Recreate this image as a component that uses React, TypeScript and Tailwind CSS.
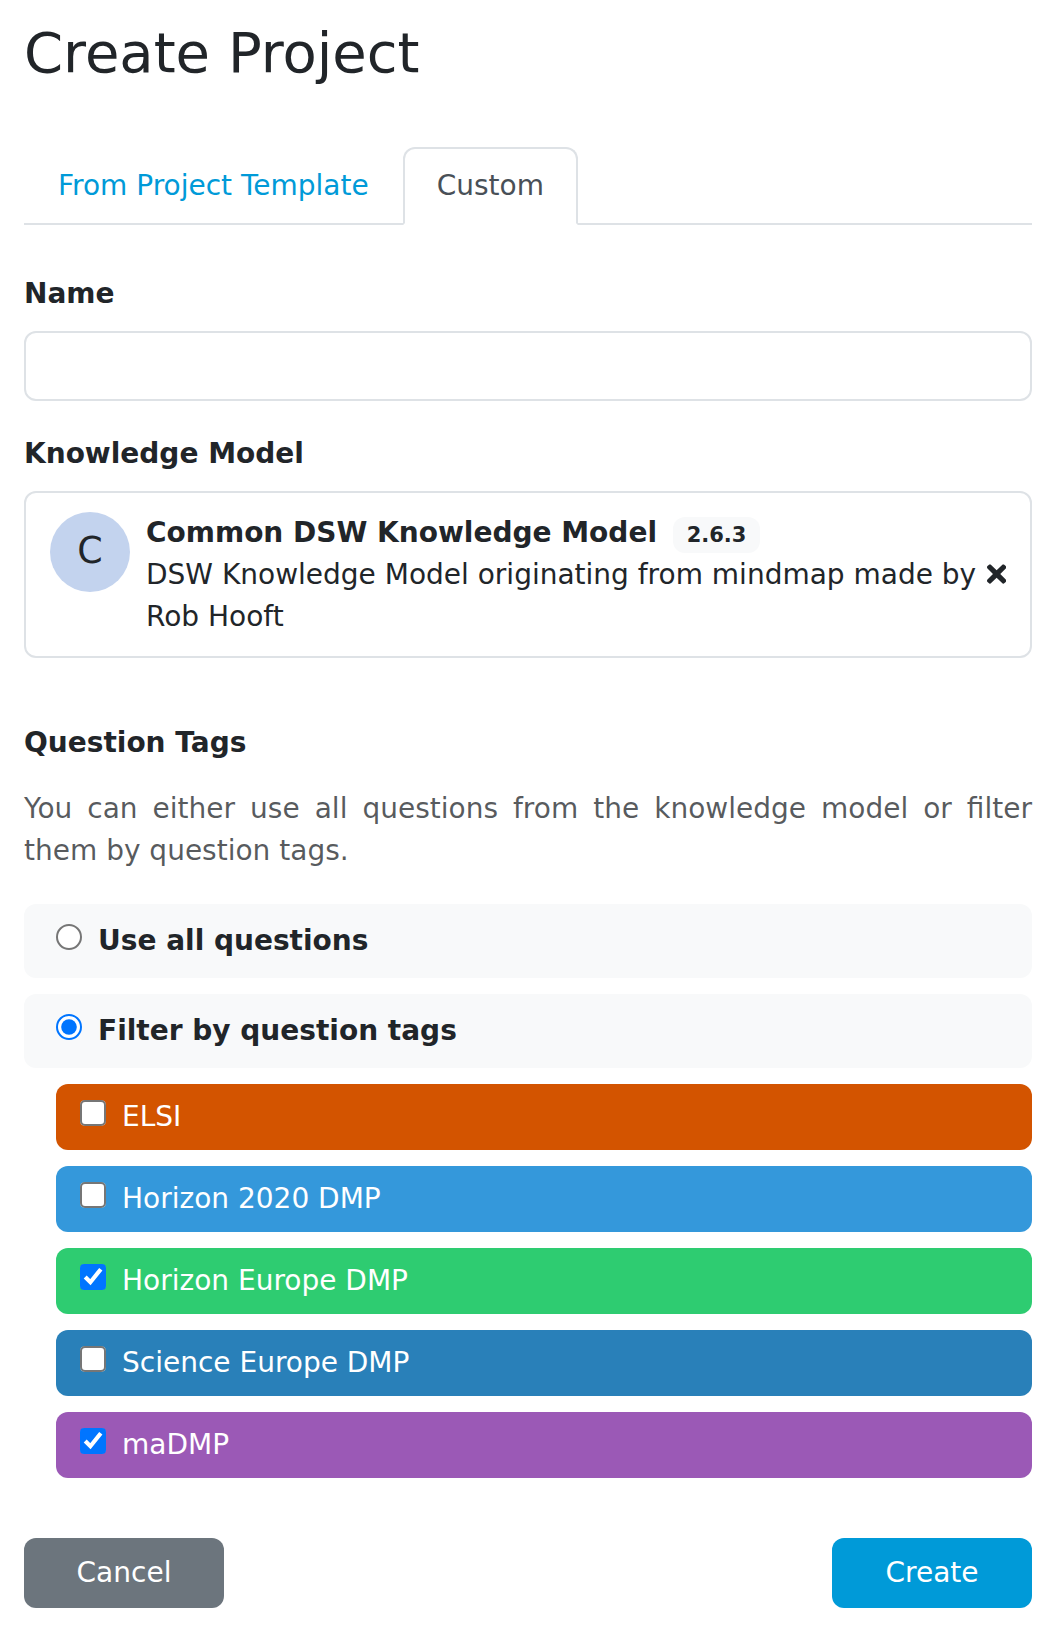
import { useState } from "react";
import { FaTimes } from "react-icons/fa";

const initialTags = [
  { name: "ELSI", color: "bg-[#d35400]", checked: false },
  { name: "Horizon 2020 DMP", color: "bg-[#3498db]", checked: false },
  { name: "Horizon Europe DMP", color: "bg-[#2ecc71]", checked: true },
  { name: "Science Europe DMP", color: "bg-[#2980b9]", checked: false },
  { name: "maDMP", color: "bg-[#9b59b6]", checked: true },
];

function Tabs() {
  return (
    <nav className="mt-[60px] flex h-[78px] border-b-2 border-[#dee2e6]">
      <a className="-mb-0.5 border-2 border-transparent px-8 py-4 text-[#009ad8]" href="#template">
        From Project Template
      </a>
      <a
        className="-mb-0.5 rounded-t-xl border-2 border-[#dee2e6] border-b-white bg-white px-8 py-4 text-[#495057]"
        href="#custom"
      >
        Custom
      </a>
    </nav>
  );
}

function KnowledgeModelCard() {
  return (
    <div className="mt-4 flex h-[167px] items-start rounded-xl border-2 border-[#dee2e6] px-6 pt-[19px]">
      <div className="flex size-20 shrink-0 items-center justify-center rounded-full bg-[#c3d3ee] pb-0.5 text-[36.4px]">
        C
      </div>
      <div className="ml-4 flex-1">
        <div className="flex h-[42px] items-start">
          <strong>Common DSW Knowledge Model</strong>
          <span className="ml-4 mt-[5px] h-9 rounded-xl bg-[#f8f9fa] px-[13.65px] pt-2 text-[21px] leading-[21px] font-bold">
            2.6.3
          </span>
        </div>
        <p>DSW Knowledge Model originating from mindmap made by Rob Hooft</p>
      </div>
      <button type="button" aria-label="Clear" className="mt-12">
        <FaTimes className="h-7 w-[19.25px]" />
      </button>
    </div>
  );
}

export default function App() {
  const [filter, setFilter] = useState(true);
  const [tags, setTags] = useState(initialTags);

  const toggle = (name: string) =>
    setTags(tags.map((t) => (t.name === name ? { ...t, checked: !t.checked } : t)));

  return (
    <main className="min-h-[1638px] bg-white px-6 pt-[19px] font-['DejaVu_Sans',sans-serif] text-[28px] leading-[42px] text-[#212529]">
      <h1 className="text-[56px] leading-[68px]">Create Project</h1>
      <Tabs />

      <label className="mt-12 block font-bold" htmlFor="name">
        Name
      </label>
      <input id="name" className="mt-4 block h-[70px] w-full rounded-xl border-2 border-[#dee2e6] px-6" />

      <div className="mt-8 font-bold">Knowledge Model</div>
      <KnowledgeModelCard />

      <div className="mt-16 font-bold">Question Tags</div>
      <p className="mt-6 text-justify text-[#212529]/75">
        You can either use all questions from the knowledge model or filter them by question tags.
      </p>

      <div className="mt-8 flex flex-col gap-4">
        <label className="flex items-start gap-4 rounded-xl bg-[#f8f9fa] px-8 py-4 font-bold">
          <input
            type="radio"
            name="mode"
            className="m-0 mt-[2px] size-[13px] [zoom:2]"
            checked={!filter}
            onChange={() => setFilter(false)}
          />
          Use all questions
        </label>
        <label className="flex items-start gap-4 rounded-xl bg-[#f8f9fa] px-8 py-4 font-bold">
          <input
            type="radio"
            name="mode"
            className="m-0 mt-[2px] size-[13px] [zoom:2]"
            checked={filter}
            onChange={() => setFilter(true)}
          />
          Filter by question tags
        </label>
        {tags.map((tag) => (
          <label
            key={tag.name}
            className={`ml-8 flex items-start gap-4 rounded-xl px-6 py-3 text-white ${tag.color}`}
          >
            <input
              type="checkbox"
              className="m-0 mt-[2px] size-[13px] [zoom:2]"
              checked={tag.checked}
              onChange={() => toggle(tag.name)}
            />
            {tag.name}
          </label>
        ))}
      </div>

      <div className="mt-[60px] flex justify-between">
        <button type="button" className="h-[70px] w-[200px] rounded-xl bg-[#6c757d] text-white">
          Cancel
        </button>
        <button type="button" className="h-[70px] w-[200px] rounded-xl bg-[#009ad8] text-white">
          Create
        </button>
      </div>
    </main>
  );
}
